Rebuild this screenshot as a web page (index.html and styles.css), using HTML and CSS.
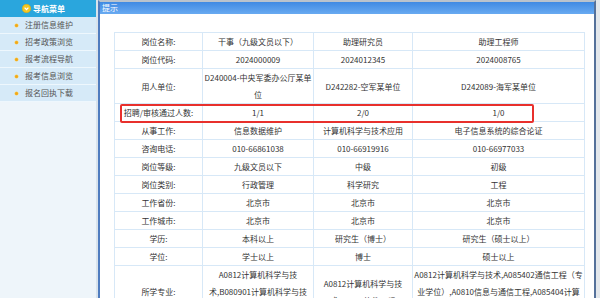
FILE: index.html
```html
<!DOCTYPE html>
<html lang="zh-CN">
<head>
<meta charset="utf-8">
<title>提示</title>
<link rel="stylesheet" href="styles.css">
</head>
<body>
<div class="page">
  <aside class="sidebar">
    <div class="side-head">
      <svg class="head-icon" width="9" height="9" viewBox="0 0 9 9"><circle cx="4.5" cy="4.5" r="4.3" fill="#f3c623" stroke="#e0a800" stroke-width="0.5"/><path d="M2.6 3.6 L4.5 5.6 L6.4 3.6" fill="none" stroke="#fff" stroke-width="1.3"/></svg>
      <span>导航菜单</span>
    </div>
    <ul class="menu">
      <li><i class="dot"></i>注册信息维护</li>
      <li><i class="dot"></i>招考政策浏览</li>
      <li><i class="dot"></i>报考流程导航</li>
      <li><i class="dot"></i>报考信息浏览</li>
      <li><i class="dot"></i>报名回执下载</li>
    </ul>
  </aside>
  <div class="gap"></div>
  <section class="dialog">
    <div class="dialog-title">提示</div>
    <div class="dialog-body">
      <div class="table-wrap">
        <table class="info">
          <colgroup><col class="c1"><col class="c2"><col class="c3"><col class="c4"></colgroup>
          <tr><td>岗位名称:</td><td>干事（九级文员以下）</td><td>助理研究员</td><td>助理工程师</td></tr>
          <tr><td>岗位代码:</td><td>2024000009</td><td>2024012345</td><td>2024008765</td></tr>
          <tr><td>用人单位:</td><td>D240004-中央军委办公厅某单位</td><td>D242282-空军某单位</td><td>D242089-海军某单位</td></tr>
          <tr><td>招聘/审核通过人数:</td><td>1/1</td><td>2/0</td><td>1/0</td></tr>
          <tr><td>从事工作:</td><td>信息数据维护</td><td>计算机科学与技术应用</td><td>电子信息系统的综合论证</td></tr>
          <tr><td>咨询电话:</td><td>010-66861038</td><td>010-66919916</td><td>010-66977033</td></tr>
          <tr><td>岗位等级:</td><td>九级文员以下</td><td>中级</td><td>初级</td></tr>
          <tr><td>岗位类别:</td><td>行政管理</td><td>科学研究</td><td>工程</td></tr>
          <tr><td>工作省份:</td><td>北京市</td><td>北京市</td><td>北京市</td></tr>
          <tr><td>工作城市:</td><td>北京市</td><td>北京市</td><td>北京市</td></tr>
          <tr><td>学历:</td><td>本科以上</td><td>研究生（博士）</td><td>研究生（硕士以上）</td></tr>
          <tr><td>学位:</td><td>学士以上</td><td>博士</td><td>硕士以上</td></tr>
          <tr><td>所学专业:</td><td>A0812计算机科学与技术,B080901计算机科学与技术,B080902软件工程</td><td>A0812计算机科学与技术,A0835软件工程</td><td>A0812计算机科学与技术,A085402通信工程（专业学位）,A0810信息与通信工程,A085404计算机技术（专业学位）</td></tr>
        </table>
        <div class="mark"></div>
      </div>
    </div>
  </section>
</div>
</body>
</html>
```
FILE: styles.css
```css
html, body {
  margin: 0;
  padding: 0;
}
body {
  background: #e3e7eb;
  font-family: "Noto Sans CJK SC", "Noto Sans", sans-serif;
  font-size: 8px;
  color: #333;
}
.page {
  display: flex;
  width: 600px;
  height: 298px;
  overflow: hidden;
}
.sidebar {
  width: 96px;
  flex: none;
  background: #eef5fa;
}
.side-head {
  height: 17px;
  background: #2aa6dd;
  color: #fff;
  font-weight: bold;
  display: flex;
  align-items: center;
  gap: 2px;
  padding-left: 22px;
  box-sizing: border-box;
  line-height: 17px;
}
.head-icon {
  display: block;
}
.menu {
  list-style: none;
  margin: 0;
  padding: 0;
}
.menu li {
  height: 16px;
  line-height: 16px;
  border-bottom: 1px solid #eef7fd;
  background: #d6eaf8;
  color: #555;
  display: flex;
  align-items: center;
  padding-left: 15px;
}
.dot {
  width: 3px;
  height: 3px;
  border-radius: 50%;
  background: #f2a619;
  box-shadow: 0 0 0 0.5px #f7d35a;
  margin-right: 7px;
}
.gap {
  width: 2px;
  flex: none;
  background: #d9e3ec;
}
.dialog {
  width: 494px;
  flex: none;
  border-left: 2px solid #4f7cbf;
  border-right: 2px solid #55719a;
  border-top: 2px solid #b9c3cd;
  background: #fff;
}
.dialog-title {
  height: 12px;
  line-height: 12px;
  background: linear-gradient(#3f8ae3, #69aaf1);
  color: #fff;
  padding-left: 2px;
}
.dialog-body {
  padding: 18px 10px 0 14px;
}
.table-wrap {
  position: relative;
}
.info {
  width: 470px;
  border-collapse: collapse;
  table-layout: fixed;
}
.c1 { width: 88px; }
.c2 { width: 111px; }
.c3 { width: 99px; }
.c4 { width: 172px; }
.info td {
  border: 1px solid #d7e8f7;
  padding: 0 1px;
  line-height: 17px;
  text-align: center;
  vertical-align: middle;
  color: #333;
}
.mark {
  position: absolute;
  left: 6px;
  top: 72px;
  width: 410px;
  height: 15px;
  border: 2px solid #e8302c;
  border-radius: 2px;
}
```
